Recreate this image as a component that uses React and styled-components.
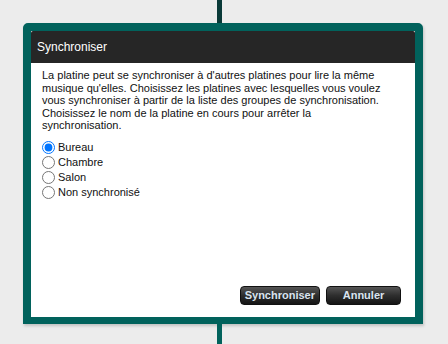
import React, { useState } from 'react';
import styled, { createGlobalStyle } from 'styled-components';

const GlobalStyle = createGlobalStyle`
  html, body {
    margin: 0;
    padding: 0;
    background: #ececec;
  }
  body {
    font-family: "Liberation Sans", Arial, sans-serif;
  }
`;

const Page = styled.div`
  display: flex;
  flex-direction: column;
  width: 448px;
  height: 344px;
  overflow: hidden;
`;

const Connector = styled.div`
  width: 5px;
  margin-left: 217px;
  flex: ${(p) => (p.$grow ? 1 : 'none')};
  height: ${(p) => (p.$grow ? 'auto' : '23px')};
  background: ${(p) => p.$color};
`;

const Dialog = styled.div`
  display: flex;
  flex-direction: column;
  width: 384px;
  height: 286px;
  margin-left: 23px;
  border: 8px solid #01625c;
  border-bottom-width: 7px;
  border-radius: 5px 5px 0 0;
  background: #fff;
  box-shadow: 1px 2px 3px rgba(0, 0, 0, 0.18);
`;

const Header = styled.div`
  height: 32px;
  line-height: 32px;
  padding: 0 6px;
  background: #262626;
  color: #fff;
  font-size: 12px;
  border-radius: 2px 2px 0 0;
`;

const Body = styled.div`
  flex: 1;
  display: flex;
  flex-direction: column;
  padding: 6px 14px 12px 11px;
`;

const Text = styled.p`
  margin: 0;
  max-width: 345px;
  font-size: 11px;
  line-height: 12.5px;
  color: #111;
`;

const Options = styled.div`
  display: grid;
  grid-auto-rows: 15px;
  margin-top: 8px;
`;

const Option = styled.label`
  display: flex;
  align-items: center;
  gap: 3px;
  font-size: 11px;
  color: #111;
`;

const Radio = styled.input`
  width: 13px;
  height: 13px;
  margin: 0;
`;

const Actions = styled.div`
  margin-top: auto;
  display: flex;
  justify-content: flex-end;
  gap: 6px;
`;

const Button = styled.button`
  min-width: 75px;
  height: 19px;
  padding: 0 4px;
  border: 1px solid #111;
  border-radius: 4px;
  background: linear-gradient(#555 0%, #2e2e2e 50%, #151515 100%);
  color: #d9e3ef;
  font-family: "Liberation Sans", Arial, sans-serif;
  font-size: 11px;
  font-weight: bold;
  line-height: 17px;
  cursor: pointer;
`;

const rooms = ['Bureau', 'Chambre', 'Salon', 'Non synchronisé'];

export default function App() {
  const [room, setRoom] = useState('Bureau');

  return (
    <Page>
      <GlobalStyle />
      <Connector $color="#0a3a38" />
      <Dialog>
        <Header>Synchroniser</Header>
        <Body>
          <Text>
            La platine peut se synchroniser à d'autres platines pour lire la même
            musique qu'elles. Choisissez les platines avec lesquelles vous voulez
            vous synchroniser à partir de la liste des groupes de synchronisation.
            Choisissez le nom de la platine en cours pour arrêter la
            synchronisation.
          </Text>
          <Options>
            {rooms.map((r) => (
              <Option key={r}>
                <Radio
                  type="radio"
                  name="room"
                  checked={room === r}
                  onChange={() => setRoom(r)}
                />
                {r}
              </Option>
            ))}
          </Options>
          <Actions>
            <Button>Synchroniser</Button>
            <Button>Annuler</Button>
          </Actions>
        </Body>
      </Dialog>
      <Connector $grow $color="#01625c" />
    </Page>
  );
}
